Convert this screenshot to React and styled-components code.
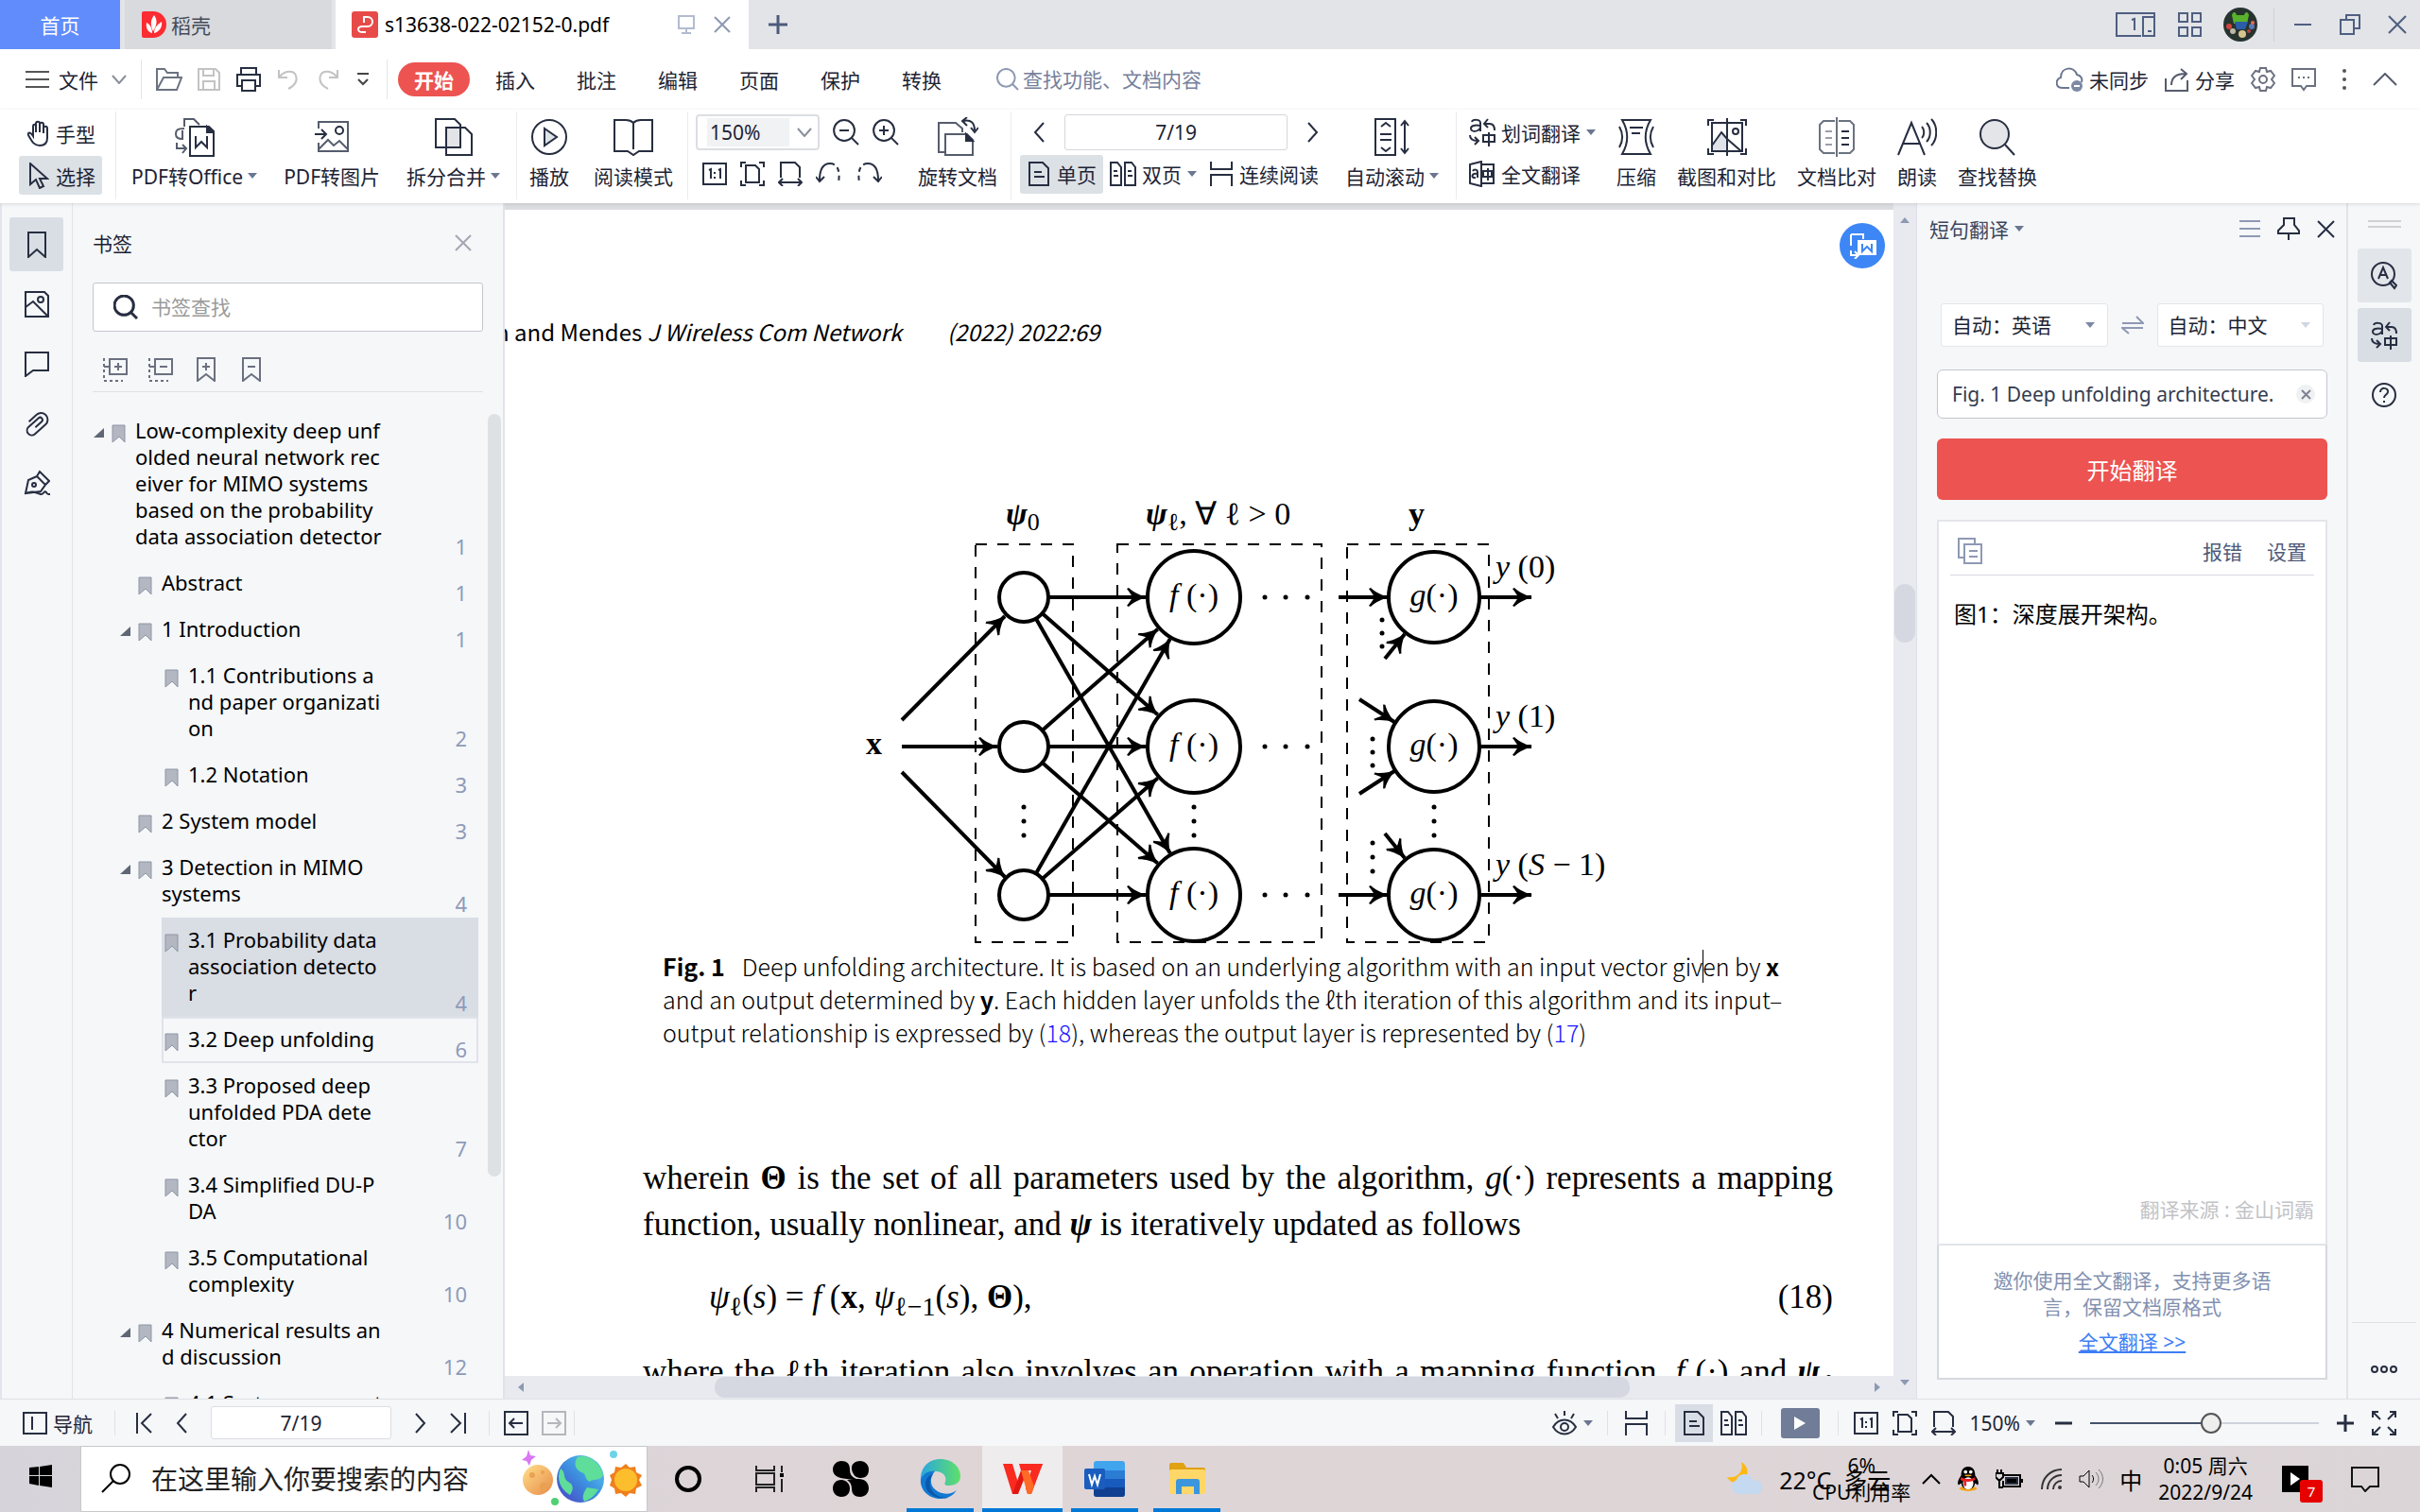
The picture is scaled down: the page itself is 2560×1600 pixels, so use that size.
import styled, { createGlobalStyle } from "styled-components";
import { useState } from "react";

const ui = `"Noto Sans", "Open Sans", "Noto Sans CJK SC", sans-serif`;
const ink = "#272e41";

// ---------- icons ----------
function Ico({ w = 26, h = 26, s = 2, c, children }) {
  return (
    <Svg width={w} height={h} viewBox={`0 0 ${w} ${h}`} strokeWidth={s} $c={c} aria-hidden="true">
      {children}
    </Svg>
  );
}

const Caret = ({ c = "#6b7690" }) => (
  <Ico w={10} h={6} s={0} c={c}><path d="M0 0h10L5 6z" fill="currentColor" /></Ico>
);
const Close = ({ w = 20, c = ink, s = 2 }) => (
  <Ico w={w} h={w} c={c} s={s}><path d={`M1 1L${w - 1} ${w - 1}M${w - 1} 1L1 ${w - 1}`} /></Ico>
);
const ChevronLeft = () => <Ico w={12} h={22}><path d="M11 1L2 11l9 10" /></Ico>;
const ChevronRight = () => <Ico w={12} h={22}><path d="M1 1l9 10-9 10" /></Ico>;
const ChevronDown = ({ c = "#8a8f9c" }) => <Ico w={16} h={10} c={c}><path d="M1 1l7 8 7-8" /></Ico>;
const OneToOne = () => (
  <Ico><path d="M1 2h24v22H1zM7 9l2-1v10M17 9l2-1v10M13 11v2M13 16v2" /></Ico>
);
const FitPage = () => (
  <Ico><path d="M1 6V1h5M20 1h5v5M25 20v5h-5M6 25H1v-5M6 4h10l4 4v14H6z" /></Ico>
);
const FitWidth = () => (
  <Ico><path d="M3 17V1h15l5 5v11M1 22h24M5 18l-4 4 4 4M21 18l4 4-4 4" /></Ico>
);
const SinglePage = () => (
  <Ico w={24} h={28}><path d="M2 2h14l6 6v18H2zM7 12h8M7 17h11" /></Ico>
);
const DoublePage = () => (
  <Ico w={28} h={28}><path d="M1 2h7l4 5v19H1zM16 2h7l4 5v19H16zM4 11h4M4 16h5M19 11h4M19 16h5" /></Ico>
);
const Continuous = () => <Ico w={26} h={28}><path d="M2 1v8h22V1M2 27V15h22v12" /></Ico>;
const Translate = () => (
  <Ico w={28} h={30}>
    <path d="M3 4c1-3 9-3 9 1v9M12 8C6 7 2 8 2 11c0 4 8 4 10-1M17 6h5c4 0 5 3 5 7M20 1l-4 5 4 4M1 18c0 4 2 6 8 6M6 20l4 4-4 4M15 18h12v7H15zM21 15v15" />
  </Ico>
);
const FullTranslate = () => (
  <Ico w={28} h={28}>
    <path d="M1 4l12-3v26L1 24zM13 4h13v20H13M4 11c1-2 5-2 5 1v6M9 14c-7-1-7 5-2 4M15 11h9v6h-9zM20 8v13" />
  </Ico>
);
const Eye = () => (
  <Ico w={28} h={28}><path d="M2 18c6-10 18-10 24 0-6 10-18 10-24 0zM14 1v5M4 4l3 5M24 4l-3 5" /><circle cx="14" cy="18" r="4" /></Ico>
);
const Glass = ({ w = 26, c = ink, s = 2, d = 0 }) => (
  <Ico w={w} h={w} c={c} s={s}>
    <circle cx={w * 0.43} cy={w * 0.43} r={w * 0.39} />
    <path d={`M${w * 0.7} ${w * 0.7}L${w - 1} ${w - 1}`} />
    {d > 0 && <path d="M7 12h10" />}
    {d > 1 && <path d="M12 7v10" />}
  </Ico>
);
const BookmarkSmall = () => (
  <Ico w={15} h={20} s={1} c="#8f95a3"><path d="M1 1h13v18l-6-6-7 6z" fill="#b2b7c2" /></Ico>
);

// the large ribbon pictures
const big = {
  office: <Ico w={42} h={42}><path d="M10 10V2h10l6 6M10 12c-8 0-9 2-9 6s3 5 7 5v-9M2 27v6h10M8 29l4 4-4 5" stroke="#555c6c" /><path d="M16 10h20l5 5v26H16zM22 20v12l6-6 6 6V20" /><path d="M34 10v6h7z" fill="currentColor" /></Ico>,
  image: <Ico w={36} h={42}><path d="M4 12V5h31v31H4v-9M4 34l10-10 6 6 6-5 9 9" stroke="#555c6c" /><path d="M0 18h11M7 13l5 5-5 5" /><circle cx="26" cy="14" r="4" /></Ico>,
  split: <Ico w={40} h={42}><path d="M1 2h20l6 6v24H1z" /><path d="M12 11h20l7 7v22H12z" /><path d="M12 11h15v21H12z" fill="#e2e4e8" /></Ico>,
  play: <Ico w={40} h={42}><circle cx="20" cy="21" r="18" /><path d="M15 12l13 9-13 9z" fill="#dfe2e7" /></Ico>,
  read: <Ico w={42} h={42}><path d="M21 6c-3-3-6-3-8-3H1v33h14l6 4 6-4h14V3H29c-2 0-5 0-8 3v28" /></Ico>,
  rotate: <Ico w={44} h={42}><path d="M9 37H2V6h18l7 6v4M9 18h23l6 6v16H9z" stroke="#555c6c" /><path d="M28 4c8-2 12 2 12 10M32 0l-5 4 5 5M36 11l4 5 4-5" /><path d="M31 18v7h7z" fill="currentColor" /></Ico>,
  scroll: <Ico w={38} h={42}><path d="M1 2h21v38H1zM7 10l5-4 5 4M7 32l5 4 5-4M6 18h12M6 24h12M32 5v32M28 9l4-5 4 5M28 33l4 5 4-5" /></Ico>,
  zip: <Ico w={40} h={42}><path d="M5 3h30c-7 12-7 24 0 36H5c7-12 7-24 0-36zM2 10c4 7 4 15 0 22M38 10c-4 7-4 15 0 22M13 11h14M15 17h9" /></Ico>,
  shot: <Ico w={42} h={42}><path d="M5 30l11-15 5 7v14H5z" fill="#dfe2e7" stroke="none" /><path d="M1 9V3h6M35 3h6v6M41 33v6h-6M7 39H1v-6M5 6h32v30H5zM21 1v40M5 30l10-14 6 7 15 13" /><circle cx="30" cy="15" r="3" /></Ico>,
  compare: <Ico w={38} h={42}><path d="M17 4H5L1 8v26l4 4h12M21 4h12l4 4v26l-4 4H21M19 0v42" stroke="#6b7280" /><path d="M7 15h7M7 22h7M7 29h7" stroke="#9a9faa" /><path d="M24 15h8M24 22h8M24 29h8" /></Ico>,
  aloud: <Ico w={42} h={42}><path d="M1 40L15 6l14 34M6 28h18M26 10c3 3 3 9 0 12M31 6c5 5 5 15 0 20M36 2c7 7 7 21 0 28" /></Ico>,
  find: <Ico w={40} h={42}><circle cx="17" cy="18" r="15" fill="#e4e5e8" /><path d="M28 29l10 11" /></Ico>,
};

const Hand = () => (
  <Ico w={24} h={28}><path d="M7 17V7c0-3 3-3 3 0v6-9c0-3 4-3 4 0v9-8c0-3 4-3 4 0v9-5c0-3 4-3 4 0v10c0 5-3 8-8 8-6 0-8-4-12-11-1-3 2-4 5 1z" /></Ico>
);
const Arrow = () => (
  <Ico w={24} h={28}><path d="M4 1v22l6-5 4 9 4-2-4-8h8z" /></Ico>
);

// ---------- data ----------
const tabs = ["插入", "批注", "编辑", "页面", "保护", "转换"];

const marks = [
  { lv: 0, open: true, page: 1, lines: ["Low-complexity deep unf", "olded neural network rec", "eiver for MIMO systems", "based on the probability", "data association detector"] },
  { lv: 1, page: 1, lines: ["Abstract"] },
  { lv: 1, open: true, page: 1, lines: ["1 Introduction"] },
  { lv: 2, page: 2, lines: ["1.1 Contributions a", "nd paper organizati", "on"] },
  { lv: 2, page: 3, lines: ["1.2 Notation"] },
  { lv: 1, page: 3, lines: ["2 System model"] },
  { lv: 1, open: true, page: 4, lines: ["3 Detection in MIMO", "systems"] },
  { lv: 2, page: 4, state: "selected", lines: ["3.1 Probability data", "association detecto", "r"] },
  { lv: 2, page: 6, state: "focused", lines: ["3.2 Deep unfolding"] },
  { lv: 2, page: 7, lines: ["3.3 Proposed deep", "unfolded PDA dete", "ctor"] },
  { lv: 2, page: 10, lines: ["3.4 Simplified DU-P", "DA"] },
  { lv: 2, page: 10, lines: ["3.5 Computational", "complexity"] },
  { lv: 1, open: true, page: 12, lines: ["4 Numerical results an", "d discussion"] },
  { lv: 2, page: 12, lines: ["4.1 System parameters"] },
];

function BigTool({ icon, label, menu }) {
  return (
    <BigButton>
      <BigIcon>{big[icon]}</BigIcon>
      <BigLabel>{label}{menu && <Caret />}</BigLabel>
    </BigButton>
  );
}

// ---------- network figure ----------
const rows = [632, 790, 947];
const X0 = 1083;
const X1 = 1263;
const X2 = 1517;

function edge(y1, y2) {
  const dx = X1 - X0;
  const dy = y2 - y1;
  const len = Math.hypot(dx, dy);
  return [X0 + (dx * 27) / len, y1 + (dy * 27) / len, X1 - (dx * 51) / len, y2 - (dy * 51) / len];
}

const arrows = [
  [954, 762, 1063, 652], [954, 790, 1055, 790], [954, 817, 1063, 928],
  ...rows.flatMap((a) => rows.map((b) => edge(a, b))),
  [1416, 632, 1468, 632], [1416, 947, 1468, 947],
  [1465, 697, 1486, 671], [1438, 740, 1475, 764], [1438, 840, 1475, 816], [1465, 882, 1486, 908],
  ...rows.map((y) => [1566, y, 1620, y]),
];

const dots = [
  ...rows.flatMap((y) => [1338, 1360, 1383].map((x) => [x, y])),
  ...[X0, X1, X2].flatMap((x) => [854, 869, 884].map((y) => [x, y])),
  ...[656, 670, 684].map((y) => [1462, y]),
  ...[782, 796, 810].map((y) => [1452, y]),
  ...[892, 907, 922].map((y) => [1452, y]),
];

function Figure() {
  return (
    <FigureSvg viewBox="680 520 1259 487" role="img" aria-label="Deep unfolding architecture">
      <defs>
        <marker id="tip" markerUnits="userSpaceOnUse" markerWidth="24" markerHeight="22" refX="20" refY="11" orient="auto">
          <path d="M21 11C14 9 6 5 2 1L0 2c3 4 5 7 6 9-1 2-3 5-6 9l2 1c4-4 12-8 19-10z" fill="#000" />
        </marker>
      </defs>
      <g fill="none" stroke="#000" strokeWidth="2" strokeDasharray="12 11">
        <path d="M1032 576h103v421h-103zM1182 576h216v421h-216zM1425 576h150v421h-150z" />
      </g>
      <g stroke="#000" strokeWidth="4">
        {arrows.map(([a, b, c, d], i) => (
          <line key={i} x1={a} y1={b} x2={c} y2={d} markerEnd="url(#tip)" />
        ))}
      </g>
      <g fill="#fff" stroke="#000" strokeWidth="4">
        {rows.map((y) => (
          <g key={y}>
            <circle cx={X0} cy={y} r="26" />
            <circle cx={X1} cy={y} r="49" />
            <circle cx={X2} cy={y} r="48" />
          </g>
        ))}
      </g>
      {dots.map(([x, y], i) => <circle key={i} cx={x} cy={y} r="2.5" />)}
      {rows.map((y) => (
        <g key={y} textAnchor="middle">
          <text x={X1} y={y + 9}><tspan fontStyle="italic">f </tspan>(·)</text>
          <text x={X2} y={y + 9}><tspan fontStyle="italic">g</tspan>(·)</text>
        </g>
      ))}
      <text x="1064" y="555" fontStyle="italic" fontWeight="bold">ψ<tspan fontSize="26" dy="6" fontStyle="normal" fontWeight="normal">0</tspan></text>
      <text x="1212" y="555" fontStyle="italic" fontWeight="bold">
        ψ<tspan fontSize="26" dy="6" fontWeight="normal" fontStyle="normal">ℓ</tspan>
        <tspan dy="-6" fontWeight="normal" fontStyle="normal">, ∀ ℓ &gt; 0</tspan>
      </text>
      <text x="1490" y="555" fontWeight="bold">y</text>
      <text x="916" y="798" fontWeight="bold">x</text>
      {[["", "0"], ["", "1"], ["S", " − 1"]].map(([v, t], i) => (
        <text key={t} x="1582" y={rows[i] - 21}>
          <tspan fontStyle="italic">y</tspan> (<tspan fontStyle="italic">{v}</tspan>{t})
        </text>
      ))}
    </FigureSvg>
  );
}

// ---------- page parts ----------
function TitleBar() {
  return (
    <TitleRow>
      <HomeTab>首页</HomeTab>
      <DocerTab>
        <svg width="26" height="28" viewBox="0 0 26 28"><path d="M0 2q0-2 2-2h10a14 14 0 0 1 0 28H2q-2 0-2-2z" fill="#fd2b32" /><path d="M13 4c4 5 3 11-1 17-3-6-3-12 1-17zM5 12c4 2 6 6 6 11-5-1-7-6-6-11zM21 11c1 6-3 11-8 12 0-5 3-9 8-12z" fill="#fff" /></svg>
        稻壳
      </DocerTab>
      <ActiveTab>
        <svg width="28" height="28" viewBox="0 0 28 28" fill="none" stroke="#fff" strokeWidth="2"><rect width="28" height="28" rx="3" fill="#e74b48" stroke="none" /><path d="M13 12V6h4a5 5 0 0 1 0 10H11a4 3 0 0 0 0 6h4" /></svg>
        <TabName>s13638-022-02152-0.pdf</TabName>
        <Ico w={20} h={20} c="#b3bbcf"><path d="M2 1h16v13H2zM10 14v5M5 19h10" /></Ico>
        <Plain aria-label="关闭标签"><Close w={18} c="#8e99b3" /></Plain>
      </ActiveTab>
      <NewTab aria-label="新建"><Ico w={22} h={22} s={3} c="#4c5b7a"><path d="M11 1v20M1 11h20" /></Ico></NewTab>
      <Spring />
      <WindowTools>
        <Ico w={42} h={26} c="#4f5f80"><path d="M27 25H1V1h40v24M29 5h12v20H29zM34 20h4M17 8l3-1v12" /></Ico>
        <Ico w={26} h={26} c="#4f5f80"><path d="M2 1h9v9H2zM16 1h9v9h-9zM2 16h9v9H2zM16 16h9v9h-9z" /></Ico>
        <svg width="36" height="36" viewBox="0 0 36 36"><circle cx="18" cy="18" r="18" fill="#26332f" /><path d="M9 8c1-4 4-4 5 0h8c1-4 4-4 5 0l-2 9H11z" fill="#58b22b" /><path d="M12 15h14l-3 8h-9z" fill="#2b5da8" /><circle cx="6" cy="20" r="3" fill="#d2443c" /><circle cx="30" cy="20" r="3" fill="#5a78b4" /><circle cx="10" cy="25" r="3" fill="#bdb7a6" /><circle cx="20" cy="28" r="4" fill="#d6c58d" /><circle cx="31" cy="16" r="2" fill="#e36a5c" /><circle cx="27" cy="25" r="2" fill="#b5423a" /></svg>
      </WindowTools>
      <WindowTools $line>
        <Plain aria-label="最小化"><Ico w={20} h={20} c="#4f5f80"><path d="M1 10h18" /></Ico></Plain>
        <Plain aria-label="还原"><Ico w={22} h={22} c="#4f5f80"><path d="M1 6h14v15H1zM7 6V1h14v14h-6" /></Ico></Plain>
        <Plain aria-label="关闭"><Close w={20} c="#4f5f80" /></Plain>
      </WindowTools>
    </TitleRow>
  );
}

function MenuBar() {
  return (
    <MenuRow>
      <MenuGroup $gap={9} $l={27} $r={15}>
        <Ico w={26} h={20} c="#555"><path d="M0 2h25M0 10h25M0 18h25" /></Ico>
        <Plain>文件</Plain>
        <Chev><ChevronDown /></Chev>
      </MenuGroup>
      <MenuGroup $gap={16} $l={15} $r={18}>
        <Ico w={28} h={24} c="#6b7280"><path d="M1 23V1h8l3 4h11v5M1 23L8 10h19l-5 13z" /></Ico>
        <Ico w={24} h={24} c="#c3c3c3"><path d="M1 1h18l4 4v18H1zM6 1v7h11V1M6 23v-9h12v9" /></Ico>
        <Ico w={28} h={26}><path d="M6 7V1h16v6M6 20H2V8h24v12h-4M7 14h14v11H7z" /><path d="M1 8h26" /></Ico>
        <Ico w={26} h={24} c="#c3c3c3"><path d="M2 2v8h9M2 10C8 2 18 2 20 8c2 6-2 11-8 14" /></Ico>
        <Ico w={26} h={24} c="#c3c3c3"><path d="M22 2v8h-9M22 10C16 2 6 2 4 8c-2 6 2 11 8 14" /></Ico>
        <Ico w={14} h={14} c="#444"><path d="M1 1h12M2 7l5 5 5-5" /></Ico>
      </MenuGroup>
      <Tabs>
        <StartTab>开始</StartTab>
        {tabs.map((t) => <TabButton key={t}>{t}</TabButton>)}
      </Tabs>
      <FindBox>
        <Glass w={24} c="#8e99b3" />
        <input aria-label="查找功能" placeholder="查找功能、文档内容" />
      </FindBox>
      <Spring />
      <MenuTools>
        <Plain>
          <Ico w={29} h={26} c="#6b7690"><path d="M14 22H7c-8 0-8-9-2-11C5-1 20-1 22 8c5 1 6 5 5 8" /><circle cx="22" cy="20" r="6" fill="#7c88a4" stroke="none" /><path d="M19 20h6" stroke="#fff" /></Ico>
          未同步
        </Plain>
        <Plain>
          <Ico w={26} h={26} c="#555c6c"><path d="M1 12v13h23V14M7 19C7 11 12 7 22 7M17 2l6 5-6 6" /></Ico>
          分享
        </Plain>
        <Ico w={26} h={26} c="#6b7080"><circle cx="13" cy="13" r="4" /><path d="M10 1h6l1 4 4-1 4 5-3 4 3 4-4 5-4-1-1 4h-6l-1-4-4 1-4-5 3-4-3-4 4-5 4 1z" /></Ico>
        <Ico w={26} h={26} c="#6b7080"><path d="M1 2h24v18h-9l-3 4-3-4H1zM7 11h2M12 11h2M17 11h2" /></Ico>
        <Ico w={4} h={24} s={0} c="#555"><circle cx="2" cy="3" r="2" fill="currentColor" /><circle cx="2" cy="12" r="2" fill="currentColor" /><circle cx="2" cy="21" r="2" fill="currentColor" /></Ico>
        <Ico w={26} h={14} c="#555c6c"><path d="M1 13L13 1l12 12" /></Ico>
      </MenuTools>
    </MenuRow>
  );
}

function Ribbon({ page, setPage }) {
  return (
    <RibbonRow>
      <Group $l={20} $r={14}>
        <Rows>
          <SmallTool><Hand />手型</SmallTool>
          <SmallTool $on><Arrow />选择</SmallTool>
        </Rows>
      </Group>
      <Group $l={16} $r={17} $gap={28}>
        <BigTool icon="office" label="PDF转Office" menu />
        <BigTool icon="image" label="PDF转图片" />
        <BigTool icon="split" label="拆分合并" menu />
      </Group>
      <Group $l={13} $r={15} $gap={26}>
        <BigTool icon="play" label="播放" />
        <BigTool icon="read" label="阅读模式" />
      </Group>
      <Group $l={8} $r={14} $gap={20}>
        <Rows>
          <Row $gap={14}>
            <Combo>
              <select aria-label="缩放" defaultValue="150"><option value="150">150%</option></select>
              <ChevronDown c="#8a8f9c" />
            </Combo>
            <Glass w={28} d={1} />
            <Glass w={28} d={2} />
          </Row>
          <Row $gap={14} $l={7}>
            <OneToOne />
            <FitPage />
            <FitWidth />
            <Ico w={28} h={26}><path d="M4 20C4 8 8 2 15 2" /><path d="M15 2c8 0 11 8 9 20" strokeDasharray="5 4" /><path d="M0 16l4 5 5-5" /></Ico>
            <Ico w={28} h={26}><path d="M24 20C24 8 20 2 13 2" /><path d="M13 2C5 2 2 10 4 22" strokeDasharray="5 4" /><path d="M28 16l-4 5-5-5" /></Ico>
          </Row>
        </Rows>
        <BigTool icon="rotate" label="旋转文档" />
      </Group>
      <Group $l={9} $r={18} $gap={28}>
        <Rows>
          <Row $gap={21} $l={14}>
            <Plain aria-label="上一页"><ChevronLeft /></Plain>
            <PageField aria-label="页码" value={page} onChange={(e) => setPage(e.target.value)} />
            <Plain aria-label="下一页"><ChevronRight /></Plain>
          </Row>
          <Row $gap={7}>
            <SmallTool $on><SinglePage />单页</SmallTool>
            <Plain><DoublePage />双页<Caret /></Plain>
            <Plain $l={6}><Continuous />连续阅读</Plain>
          </Row>
        </Rows>
        <BigTool icon="scroll" label="自动滚动" menu />
      </Group>
      <Group $l={13} $gap={22} $last>
        <Rows>
          <Row><Plain><Translate />划词翻译<Caret /></Plain></Row>
          <Row><Plain><FullTranslate />全文翻译</Plain></Row>
        </Rows>
        <BigTool icon="zip" label="压缩" />
        <BigTool icon="shot" label="截图和对比" />
        <BigTool icon="compare" label="文档比对" />
        <BigTool icon="aloud" label="朗读" />
        <BigTool icon="find" label="查找替换" />
      </Group>
    </RibbonRow>
  );
}

function Bookmarks() {
  return (
    <BookmarkPanel>
      <PanelHead>
        <h2>书签</h2>
        <Plain aria-label="关闭书签"><Close w={18} c="#a3a7b3" /></Plain>
      </PanelHead>
      <SearchBox>
        <Glass w={26} s={3} />
        <input aria-label="书签查找" placeholder="书签查找" />
      </SearchBox>
      <MarkTools>
        <Ico c="#6b7080"><path d="M7 2h18v16H7zM12 10h8M16 6v8" /><path d="M1 1v24h20" strokeDasharray="3 3" /><path d="M1 10h6" /></Ico>
        <Ico c="#6b7080"><path d="M7 2h18v16H7zM12 10h8" /><path d="M1 1v24h20" strokeDasharray="3 3" /><path d="M1 10h6" /></Ico>
        <Ico c="#6b7080"><path d="M4 1h18v24l-9-7-9 7zM9 10h8M13 6v8" /></Ico>
        <Ico c="#6b7080"><path d="M4 1h18v24l-9-7-9 7zM9 10h8" /></Ico>
      </MarkTools>
      <MarkScroll>
        <MarkList>
          {marks.map((m) => (
            <Mark key={m.lines[0]} $lv={m.lv}>
              <Fold>{m.open && <Ico w={11} h={10} s={0} c="#5f6674"><path d="M11 0v10H0z" fill="currentColor" /></Ico>}</Fold>
              <MarkBody $state={m.state}>
                <BookmarkSmall />
                <MarkText>{m.lines.map((l) => <span key={l}>{l}</span>)}</MarkText>
                <MarkPage>{m.page}</MarkPage>
              </MarkBody>
            </Mark>
          ))}
        </MarkList>
        <MarkThumb />
      </MarkScroll>
    </BookmarkPanel>
  );
}

function Document() {
  return (
    <DocArea>
      <DocMain>
        <Page>
          <RunningHead>n and Mendes <i>J Wireless Com Network</i><i>(2022) 2022:69</i></RunningHead>
          <Column>
            <Figure />
            <Caption>
              <div><b>Fig. 1</b><Lead>Deep unfolding architecture. It is based on an underlying algorithm with an input vector giv<TextCaret />en by <b>x</b></Lead></div>
              <div>and an output determined by <b>y</b>. Each hidden layer unfolds the ℓth iteration of this algorithm and its input–</div>
              <div>output relationship is expressed by (<a href="#18">18</a>), whereas the output layer is represented by (<a href="#17">17</a>)</div>
            </Caption>
            <Body>
              <Line $full>wherein <b>Θ</b> is the set of all parameters used by the algorithm, <i>g</i>(·) represents a mapping</Line>
              <Line>function, usually nonlinear, and <b><i>ψ</i></b> is iteratively updated as follows</Line>
            </Body>
            <Equation>
              <span><i>ψ</i><sub>ℓ</sub>(<i>s</i>) = <i>f</i> (<b>x</b>, <i>ψ</i><sub>ℓ−1</sub>(<i>s</i>), <b>Θ</b>),</span>
              <span>(18)</span>
            </Equation>
            <Body>
              <Line $full>where the ℓth iteration also involves an operation with a mapping function, <i>f</i> (·) and <b><i>ψ</i></b><sub>ℓ</sub></Line>
            </Body>
          </Column>
        </Page>
        <ConvertBadge aria-label="转换">
          <Ico w={30} h={28} c="#fff"><path d="M3 2h13v5M3 2v12M3 19v5h7M7 20l4 4-4 4" /><path d="M11 9h18v14H11z" fill="#fff" /><path d="M15 12v8l5-5 5 5v-8" stroke="#3d86f5" /></Ico>
        </ConvertBadge>
        <HScroll>
          <Ico w={6} h={10} s={0} c="#8e99b3"><path d="M6 0v10L0 5z" fill="currentColor" /></Ico>
          <HTrack><HThumb /></HTrack>
          <Ico w={6} h={10} s={0} c="#8e99b3"><path d="M0 0v10l6-5z" fill="currentColor" /></Ico>
        </HScroll>
      </DocMain>
      <VScroll>
        <Ico w={10} h={6} s={0} c="#8e99b3"><path d="M0 6h10L5 0z" fill="currentColor" /></Ico>
        <VTrack><VThumb /></VTrack>
        <Caret c="#8e99b3" />
      </VScroll>
    </DocArea>
  );
}

function TranslatePanel() {
  const [text, setText] = useState("Fig. 1 Deep unfolding architecture.");
  return (
    <SidePanel>
      <SideHead>
        <Plain>短句翻译<Caret /></Plain>
        <Spring />
        <Ico w={22} h={20} c="#8e99b3"><path d="M0 2h22M0 10h22M0 18h22" /></Ico>
        <Ico w={24} h={24}><path d="M7 1h11v7l5 6v3H1v-3l6-6zM12 17v7" /></Ico>
        <Plain aria-label="关闭翻译"><Close w={19} /></Plain>
      </SideHead>
      <LangRow>
        <Lang>
          <select aria-label="源语言"><option>自动：英语</option></select>
          <Caret c="#7c88a4" />
        </Lang>
        <Ico w={24} h={20} c="#8e99b3"><path d="M1 8h22l-7-7M23 13H1l7 6" /></Ico>
        <Lang>
          <select aria-label="目标语言"><option>自动：中文</option></select>
          <Caret c="#cfd6e4" />
        </Lang>
      </LangRow>
      <Source>
        <input aria-label="原文" value={text} onChange={(e) => setText(e.target.value)} />
        <Clear aria-label="清空" onClick={() => setText("")}><Close w={11} c="#7c8290" /></Clear>
      </Source>
      <Go>开始翻译</Go>
      <Result>
        <ResultHead>
          <Ico w={26} h={28} c="#8e99b3"><path d="M6 21H1V1h17v5M7 7h18v20H7zM12 14h9M12 20h9" /></Ico>
          <Spring />
          <Plain>报错</Plain>
          <Plain>设置</Plain>
        </ResultHead>
        <ResultText>图1：深度展开架构。</ResultText>
        <Origin>翻译来源 : 金山词霸</Origin>
      </Result>
      <Invite>
        <p>邀你使用全文翻译，支持更多语<br />言，保留文档原格式</p>
        <a href="#full">全文翻译 &gt;&gt;</a>
      </Invite>
    </SidePanel>
  );
}

function StatusBar({ page, setPage }) {
  return (
    <StatusRow>
      <StatusGroup $l={24} $r={23}>
        <Plain><Ico w={26} h={26}><path d="M1 2h24v22H1zM10 6v14" /></Ico>导航</Plain>
      </StatusGroup>
      <StatusGroup $l={21} $r={23} $gap={25}>
        <Plain aria-label="首页页码"><Ico w={18} h={22}><path d="M2 0v22M17 1L7 11l10 10" /></Ico></Plain>
        <Plain aria-label="上一页"><ChevronLeft /></Plain>
        <StatusField aria-label="当前页" value={page} onChange={(e) => setPage(e.target.value)} />
        <Plain aria-label="下一页"><ChevronRight /></Plain>
        <Plain aria-label="末页"><Ico w={18} h={22}><path d="M16 0v22M1 1l10 10L1 21" /></Ico></Plain>
      </StatusGroup>
      <StatusGroup $l={15} $r={8} $gap={14}>
        <Ico><path d="M1 1h24v24H1zM20 13H6M11 8l-5 5 5 5" /></Ico>
        <Ico c="#b4b6bb"><path d="M1 1h24v24H1zM6 13h14M15 8l5 5-5 5" /></Ico>
      </StatusGroup>
      <Spring />
      <StatusGroup $r={15}><Plain><Eye /><Caret /></Plain></StatusGroup>
      <StatusGroup $l={17} $r={17}><Continuous /></StatusGroup>
      <StatusGroup $l={10} $r={15} $gap={8}>
        <ViewOn aria-label="单页"><SinglePage /></ViewOn>
        <DoublePage />
      </StatusGroup>
      <StatusGroup $l={20} $r={19}>
        <PlayButton aria-label="播放"><Ico w={12} h={14} s={0} c="#fff"><path d="M0 0l12 7-12 7z" fill="currentColor" /></Ico></PlayButton>
      </StatusGroup>
      <StatusGroup $l={16} $gap={15} $last>
        <OneToOne />
        <FitPage />
        <FitWidth />
        <Plain>150%<Caret /></Plain>
      </StatusGroup>
      <StatusGroup $l={20} $r={25} $gap={18} $last>
        <Ico w={20} h={20} s={3}><path d="M1 10h18" /></Ico>
        <Zoom type="range" aria-label="缩放比例" min="0" max="100" defaultValue="53" />
        <Ico w={20} h={20} s={3}><path d="M1 10h18M10 1v18" /></Ico>
        <Ico><path d="M1 7V1h6M19 1h6v6M25 19v6h-6M7 25H1v-6M1 1l8 8M25 1l-8 8M25 25l-8-8M1 25l8-8" /></Ico>
      </StatusGroup>
    </StatusRow>
  );
}

function TaskBar() {
  return (
    <Task>
      <Start aria-label="开始菜单">
        <svg width="24" height="24" viewBox="0 0 24 24"><path d="M0 3l10-1v9H0zM11 2l13-2v11H11zM0 12h10v10L0 20zM11 12h13v12l-13-2z" /></svg>
      </Start>
      <TaskSearch>
        <Ico w={34} h={34}><circle cx="21" cy="12" r="10" stroke="#000" /><path d="M14 19L2 31" stroke="#000" /></Ico>
        <input aria-label="在这里输入你要搜索的内容" placeholder="在这里输入你要搜索的内容" />
        <svg width="128" height="62" viewBox="0 0 128 62">
          <defs>
            <linearGradient id="earth" x1="0" y1="1" x2="1" y2="0"><stop offset="0" stopColor="#4b3fc4" /><stop offset=".5" stopColor="#3c8fdf" /><stop offset="1" stopColor="#5bd0f0" /></linearGradient>
            <linearGradient id="moon" x1="0" y1="0" x2="1" y2="1"><stop offset="0" stopColor="#ffe08a" /><stop offset="1" stopColor="#e88a4a" /></linearGradient>
          </defs>
          <path d="M8 0l2 6 6 1-5 4-2 6-3-5-5-1 5-4z" fill="#d977f5" />
          <circle cx="18" cy="32" r="16" fill="url(#moon)" /><circle cx="12" cy="27" r="3" fill="#e9a152" /><circle cx="24" cy="39" r="4" fill="#e9a152" /><circle cx="23" cy="24" r="2" fill="#e9a152" />
          <circle cx="63" cy="31" r="25" fill="url(#earth)" />
          <path d="M60 8c8-4 24 4 27 18-2 8-10 4-14 8-6-2-3-9-9-10-6-3-9-9-4-16zM42 20c6 4 2 10 8 14 6 3 6 8 2 14-10-6-15-17-10-28zM70 40l12 2c-4 7-9 11-15 13-3-6 0-10 3-15z" fill="#5fdd9a" />
          <path d="M111 15l4 4 6-1 1 6 6 3-3 5 3 6-6 3-1 6-6-1-4 4-5-4-6 1-1-6-5-3 2-6-2-5 5-3 1-6 6 1z" fill="#f07f1d" />
          <circle cx="111" cy="32" r="12" fill="#fdbe2d" />
          <circle cx="98" cy="5" r="4" fill="#6fd3e8" /><circle cx="36" cy="55" r="4" fill="#4fd072" />
        </svg>
      </TaskSearch>
      <Pinned>
        <TaskApp aria-label="Cortana">
          <svg width="32" height="32" viewBox="0 0 32 32" fill="none" stroke="#000" strokeWidth="4"><circle cx="16" cy="16" r="12" /></svg>
        </TaskApp>
        <TaskApp aria-label="任务视图">
          <svg width="32" height="28" viewBox="0 0 32 28" fill="none" stroke="#222" strokeWidth="2"><path d="M2 0v5h19V0M2 8h19v12H2zM2 28v-5h19v5M29 0v7M29 14v14" /><path d="M27 8h4v4h-4z" fill="#000" stroke="none" /></svg>
        </TaskApp>
        <TaskApp aria-label="应用">
          <svg width="40" height="40" viewBox="0 0 40 40">
            <path d="M10 1c6 0 9 3 9 9 0 5 2 8 7 10-2 1-4 1-7 0C10 20 1 18 1 10c0-5 4-9 9-9z" />
            <path d="M39 10c0 6-3 9-9 9-5 0-8-4-9-9-1-6 4-9 9-9s9 4 9 9z" />
            <path d="M1 30c0-5 3-9 9-9 5 0 9 4 9 9 0 6-4 9-9 9s-9-4-9-9z" />
            <path d="M30 39c-6 0-9-3-9-9 0-4-2-7-5-9 3-1 7-1 12-1 7 0 11 4 11 10 0 5-4 9-9 9z" />
          </svg>
        </TaskApp>
      </Pinned>
      <TaskApp $open aria-label="Edge">
        <svg width="44" height="42" viewBox="0 0 44 42">
          <defs><linearGradient id="edge" x1="0" y1="0" x2="1" y2="0"><stop offset="0" stopColor="#2aa6e0" /><stop offset="1" stopColor="#5fe06a" /></linearGradient></defs>
          <path d="M22 0c13 0 21 9 21 18 0 8-7 10-13 10-4 0-4-2-3-4 2-6-3-11-10-11C8 13 3 18 1 24 0 10 8 0 22 0z" fill="url(#edge)" />
          <path d="M1 22c2-6 8-10 15-9-5 5-6 14 0 19 6 6 17 6 23 1-4 6-10 9-17 9C9 42 0 32 1 22z" fill="#1179d2" />
          <path d="M14 16c-5 6-5 15 2 21 4 3 9 4 14 4-14 2-24-5-24-15 0-4 3-9 8-10z" fill="#0b58ab" />
        </svg>
      </TaskApp>
      <TaskApp $open $active aria-label="WPS">
        <svg width="44" height="34" viewBox="0 0 44 34">
          <path d="M18 1h25l-3 7H20z" fill="#fa2a20" />
          <path d="M1 1h10l6 20-3 12h-3z" fill="#fa2a20" />
          <path d="M33 1h10L31 33h-4l-2-6z" fill="#fa2a20" />
          <path d="M20 8h7L17 33h-6z" fill="#e31712" />
          <path d="M20 8h8l6 17-3 8h-4z" fill="#ff6a26" />
        </svg>
      </TaskApp>
      <TaskApp $open aria-label="Word">
        <svg width="44" height="38" viewBox="0 0 44 38"><rect x="10" width="33" height="38" rx="3" fill="#41a5ee" /><path d="M10 10h33v9H10z" fill="#2b7cd3" /><path d="M10 19h33v9H10z" fill="#185abd" /><path d="M10 28h33v7q0 3-3 3H13q-3 0-3-3z" fill="#103f91" /><rect y="8" width="22" height="22" rx="2" fill="#1a5dbe" /><path d="M5 14l3 11 3-9 3 9 3-11" fill="none" stroke="#fff" strokeWidth="2" /></svg>
      </TaskApp>
      <TaskApp $open aria-label="文件资源管理器">
        <svg width="40" height="34" viewBox="0 0 40 34"><path d="M1 2q0-2 2-2h13l3 5h18q2 0 2 2v8H1z" fill="#e0a112" /><rect x="1" y="7" width="38" height="26" rx="2" fill="#ffd768" /><path d="M8 33V20q0-3 3-3h19q3 0 3 3v13h-6v-8H14v8z" fill="#3b96dd" /></svg>
      </TaskApp>
      <Spring />
      <Weather>
        <svg width="40" height="36" viewBox="0 0 40 36"><path d="M16 0c10 6 8 20-2 22-6 1-11-2-13-6 10 2 18-5 15-16z" fill="#fdb913" /><path d="M12 34a8 8 0 0 1-1-15c2-8 15-8 17 0 14 0 13 15 2 15z" fill="#c5d9f0" /></svg>
        22°C&nbsp; 多云
        <Cpu>6%<br />CPU利用率</Cpu>
      </Weather>
      <Tray>
        <Ico w={20} h={12}><path d="M1 11l9-9 9 9" stroke="#000" /></Ico>
        <svg width="24" height="28" viewBox="0 0 26 28"><ellipse cx="13" cy="25" rx="10" ry="3" fill="#f5a312" /><path d="M13 0c7 0 8 6 8 10 3 4 5 9 3 11l-3-2c-1 5-4 7-8 7s-7-2-8-7l-3 2c-2-2 0-7 3-11 0-4 1-10 8-10z" /><ellipse cx="13" cy="19" rx="6" ry="7" fill="#fff" /><path d="M5 12q8 4 16 0v3q-5 3-10 2v5H8v-5l-4-2z" fill="#e5232a" /><circle cx="10" cy="6" r="2" fill="#fff" /><circle cx="16" cy="6" r="2" fill="#fff" /><ellipse cx="13" cy="10" rx="4" ry="1" fill="#f5a312" /></svg>
        <Ico w={30} h={20}><path d="M8 6h18v12H8V12M28 10v4M2 0v4M6 0v4M0 4h8v4L5 11H3L0 8zM4 11v8h4" stroke="#000" /><path d="M11 9h12v6H11z" fill="#000" /></Ico>
        <Ico w={24} h={24} c="#333"><path d="M2 23C2 11 11 2 23 2M8 23c0-9 7-15 15-15M14 23c0-5 4-9 9-9" /><circle cx="21" cy="21" r="1" /></Ico>
        <Ico w={26} h={22} s={1}><path d="M1 8h4l6-6v18l-6-6H1zM14 7c2 2 2 6 0 8" stroke="#000" /><path d="M18 4c4 4 4 10 0 14M21 1c6 6 6 14 0 20" stroke="#777" /></Ico>
        <Ime>中</Ime>
        <Clock>0:05 周六<br />2022/9/24</Clock>
        <Notice>
          <Ico w={28} h={28} s={0}><path d="M0 0h28v28H0z" fill="#000" /><path d="M9 7l10 7-10 7z" fill="#fff" /></Ico>
          <Badge>7</Badge>
        </Notice>
        <Ico w={30} h={28}><path d="M1 2h28v20h-9l-5 5-4-5H1z" stroke="#111" /></Ico>
      </Tray>
    </Task>
  );
}

export default function App() {
  const [page, setPage] = useState("7/19");
  return (
    <Shell>
      <GlobalStyle />
      <TitleBar />
      <MenuBar />
      <Ribbon page={page} setPage={setPage} />
      <Work>
        <Rail>
          <RailButton $on aria-label="书签"><Ico w={22} h={28}><path d="M2 1h18v26l-9-8-9 8z" /></Ico></RailButton>
          <RailButton aria-label="缩略图"><Ico w={26} h={28}><path d="M1 1h20l4 4v22H1zM1 17l8-6 15 15" /><circle cx="17" cy="9" r="3" /></Ico></RailButton>
          <RailButton aria-label="批注"><Ico w={28} h={28}><path d="M2 2h24v19H10l-8 6z" /></Ico></RailButton>
          <RailButton aria-label="附件"><Ico w={28} h={28}><path transform="rotate(-42 14 14)" d="M10 16h9a2 2 0 0 0 0-5H5a5 5 0 0 0 0 10h15a7 7 0 0 0 0-14H9" /></Ico></RailButton>
          <RailButton aria-label="签名"><Ico w={28} h={28}><path d="M2 25l3-14 9-4 9 9-5 7zM14 7l3-5 10 10-4 4M2 25c8-3 10-1 16 1 3 1 4-5 6-2 1 3 2 2 4 2" /><circle cx="11" cy="16" r="2" /></Ico></RailButton>
        </Rail>
        <Bookmarks />
        <Document />
        <TranslatePanel />
        <RightRail>
          <Grip />
          <RailButton $soft aria-label="查找"><Ico w={28} h={30}><circle cx="13" cy="13" r="12" /><path d="M8 18l5-12 5 12M10 14h6M20 22l5 6 2-3-5-5z" /></Ico></RailButton>
          <RailButton $on aria-label="翻译"><Translate /></RailButton>
          <RailButton aria-label="帮助"><Ico w={28} h={28}><circle cx="14" cy="14" r="12" /><path d="M10 11c0-6 9-5 8 0-1 3-4 3-4 6M14 20v2" /></Ico></RailButton>
          <Spring />
          <More aria-label="更多"><Ico w={30} h={10}><circle cx="5" cy="5" r="3" /><circle cx="15" cy="5" r="3" /><circle cx="25" cy="5" r="3" /></Ico></More>
        </RightRail>
      </Work>
      <StatusBar page={page} setPage={setPage} />
      <TaskBar />
    </Shell>
  );
}

// ---------- styles ----------
const GlobalStyle = createGlobalStyle`
  * { box-sizing: border-box; }
  body {
    margin: 0;
    font-family: ${ui};
    font-size: 21px;
    color: #1d2333;
  }
  button, input, select {
    font: inherit;
    color: inherit;
    border: 0;
    background: none;
    padding: 0;
    margin: 0;
    outline: 0;
  }
  h2, p, ul { margin: 0; padding: 0; font-weight: 400; font-size: inherit; }
`
const Svg = styled.svg`
flex: none;
fill: none;
stroke: currentColor;
color: ${(p) => p.$c || ink};
`
const Shell = styled.div`
display: flex;
flex-direction: column;
height: 100vh;
overflow: hidden;
white-space: nowrap;
`
const Spring = styled.div`
flex: 1;
`
const Plain = styled.button`
display: flex;
align-items: center;
gap: 6px;
margin-left: ${(p) => p.$l || 0}px;
`
const TitleRow = styled.header`
display: flex;
height: 52px;
flex: none;
background: #e2e4e8;
`
const HomeTab = styled.button`
width: 127px;
background: #608dfb;
color: #fff;
margin-right: 5px;
`
const DocerTab = styled.button`
display: flex;
align-items: center;
gap: 5px;
width: 219px;
padding-left: 18px;
background: #d8dadd;
color: #444b5a;
margin-right: 4px;
`
const ActiveTab = styled.div`
display: flex;
align-items: center;
gap: 7px;
width: 437px;
padding: 0 19px 0 17px;
background: #fff;
color: #000;
button{
  margin-left: 12px;
}
`
const TabName = styled.span`
flex: 1;
`
const NewTab = styled.button`
width: 62px;
display: flex;
align-items: center;
justify-content: center;
`
const WindowTools = styled.div`
display: flex;
align-items: center;
align-self: center;
height: 36px;
gap: ${(p) => (p.$line ? 29 : 23)}px;
padding: 0 ${(p) => (p.$line ? 14 : 17)}px 0 20px;
border-left: ${(p) => (p.$line ? "1px solid #cdd0d6" : "0")};
`
const MenuRow = styled.nav`
display: flex;
align-items: center;
height: 64px;
flex: none;
background: #fff;
`
const MenuGroup = styled.div`
display: flex;
align-items: center;
height: 42px;
gap: ${(p) => p.$gap}px;
padding: 0 ${(p) => p.$r}px 0 ${(p) => p.$l}px;
border-right: 1px solid #e4e5e8;
`
const Chev = styled.span`
display: flex;
padding-left: 5px;
`
const Tabs = styled.div`
display: flex;
align-items: center;
padding-left: 11px;
`
const StartTab = styled.button`
width: 76px;
height: 36px;
border-radius: 18px;
background: #ec5351;
color: #fff;
font-weight: 700;
margin-right: 5px;
`
const TabButton = styled.button`
width: 86px;
`
const FindBox = styled.label`
display: flex;
align-items: center;
gap: 4px;
padding-left: 36px;
color: #75809a;
input{
  width: 240px;
}
input::placeholder{
  color: #75809a;
  opacity: 1;
}
`
const MenuTools = styled.div`
display: flex;
align-items: center;
gap: 17px;
padding-right: 24px;
svg:nth-last-child(2){
  margin: 0 11px;
}
`
const RibbonRow = styled.div`
display: flex;
height: 99px;
flex: none;
background: #fff;
padding: 2px 0 4px;
box-shadow: 0 1px 4px rgba(0, 0, 0, 0.12);
position: relative;
z-index: 1;
`
const Group = styled.div`
display: flex;
gap: ${(p) => p.$gap || 0}px;
padding: 0 ${(p) => p.$r || 0}px 0 ${(p) => p.$l}px;
border-right: ${(p) => (p.$last ? "0" : "1px solid #ececee")};
`
const Rows = styled.div`
display: flex;
flex-direction: column;
gap: 4px;
padding-top: 2px;
`
const Row = styled.div`
display: flex;
align-items: center;
height: 40px;
gap: ${(p) => p.$gap || 0}px;
padding-left: ${(p) => p.$l || 0}px;
`
const SmallTool = styled.button`
display: flex;
align-items: center;
gap: 7px;
width: 88px;
height: 41px;
padding-left: 8px;
border-radius: 3px;
background: ${(p) => (p.$on ? "#dce1e6" : "none")};
`
const BigButton = styled.button`
display: flex;
flex-direction: column;
align-items: center;
padding-top: 6px;
`
const BigIcon = styled.span`
height: 42px;
`
const BigLabel = styled.span`
display: flex;
align-items: center;
gap: 5px;
height: 40px;
`
const Combo = styled.div`
display: flex;
align-items: center;
width: 131px;
height: 38px;
border: 2px solid #dcdee2;
border-radius: 4px;
padding: 2px 6px 2px 10px;
select{
  appearance: none;
  flex: 1;
  height: 100%;
  background: #f1f2f4;
  padding-left: 3px;
  margin-right: 8px;
}
`
const PageField = styled.input`
width: 236px;
height: 38px;
border: 1px solid #d4d6da;
border-radius: 3px;
text-align: center;
background: #fff;
`
const Work = styled.main`
display: flex;
flex: 1;
min-height: 0;
background: #f5f7f9;
`
const Rail = styled.aside`
display: flex;
flex-direction: column;
gap: 6px;
width: 77px;
flex: none;
padding: 15px 8px;
border-left: 2px solid #e3e5ed;
border-right: 1px solid #e1e3e8;
`
const RailButton = styled.button`
display: flex;
align-items: center;
justify-content: center;
width: 57px;
height: 57px;
flex: none;
border-radius: 3px;
background: ${(p) => (p.$on ? "#d9dee5" : p.$soft ? "#e2e5ea" : "none")};
`
const BookmarkPanel = styled.section`
display: flex;
flex-direction: column;
width: 457px;
flex: none;
border-right: 2px solid #e1e3ea;
`
const PanelHead = styled.div`
display: flex;
justify-content: space-between;
align-items: center;
height: 84px;
padding: 0 33px 0 21px;
`
const SearchBox = styled.label`
display: flex;
align-items: center;
gap: 14px;
height: 52px;
margin: 0 21px;
padding-left: 21px;
background: #fff;
border: 1px solid #c4c7cc;
border-radius: 3px;
input::placeholder{
  color: #9a9a9a;
  opacity: 1;
}
`
const MarkTools = styled.div`
display: flex;
gap: 22px;
align-items: center;
height: 64px;
margin: 0 21px 17px;
padding: 16px 11px 0;
border-bottom: 1px solid #dfe1e5;
`
const MarkScroll = styled.div`
display: flex;
flex: 1;
min-height: 0;
overflow: hidden;
`
const MarkList = styled.ul`
flex: 1;
list-style: none;
color: #000;
font-size: 22px;
`
const Mark = styled.li`
display: flex;
padding: 0 10px 0 ${(p) => 22 + p.$lv * 28}px;
`
const Fold = styled.span`
width: 16px;
padding-top: 17px;
line-height: 10px;
`
const MarkBody = styled.div`
display: flex;
flex: 1;
gap: 10px;
padding: 9px 12px 12px 3px;
background: ${(p) => (p.$state === "selected" ? "#d9dde4" : "none")};
box-shadow: ${(p) => (p.$state === "focused" ? "inset 0 0 0 2px #e0e3ea" : "none")};
svg{
  margin-top: 8px;
}
`
const MarkText = styled.span`
flex: 1;
line-height: 28px;
span{
  display: block;
}
`
const MarkPage = styled.span`
align-self: flex-end;
line-height: 28px;
margin-bottom: -11px;
color: #8e9ab8;
`
const MarkThumb = styled.div`
width: 14px;
height: 77%;
margin: 6px 2px 0 0;
border-radius: 7px;
background: #dde1e4;
`
const DocArea = styled.section`
display: flex;
flex: 1;
min-width: 0;
`
const DocMain = styled.div`
position: relative;
display: flex;
flex-direction: column;
flex: 1;
min-width: 0;
border-top: 7px solid #dcdde0;
`
const Page = styled.article`
flex: 1;
min-height: 0;
overflow: hidden;
background: #fff;
color: #000;
padding-top: 111px;
`
const RunningHead = styled.div`
font-family: "Noto Sans CJK SC", sans-serif;
font-size: 24px;
line-height: 35px;
margin-left: -10px;
i + i{
  margin-left: 48px;
}
`
const Column = styled.div`
padding: 152px 64px 0 146px;
`
const FigureSvg = styled.svg`
display: block;
width: 100%;
font-family: "Liberation Serif", serif;
font-size: 34px;
`
const Caption = styled.div`
font-family: "Noto Sans CJK SC", sans-serif;
font-weight: 300;
font-size: 25px;
line-height: 35px;
padding-left: 21px;
margin-top: -2px;
div{
  height: 35px;
}
a{
  color: #1a1aff;
  text-decoration: none;
}
b{
  font-weight: 700;
}
`
const Lead = styled.span`
margin-left: 18px;
`
const TextCaret = styled.span`
position: absolute;
width: 1px;
height: 35px;
background: #000;
`
const Body = styled.div`
font-family: "Liberation Serif", serif;
font-size: 35px;
line-height: 49px;
margin-top: 112px;
& ~ &{
  margin-top: 30px;
}
`
const Line = styled.div`
text-align-last: ${(p) => (p.$full ? "justify" : "left")};
height: 49px;
sub{
  font-size: 24px;
  line-height: 0;
}
`
const Equation = styled.div`
display: flex;
justify-content: space-between;
font-family: "Liberation Serif", serif;
font-size: 35px;
line-height: 49px;
margin-top: 28px;
padding-left: 70px;
sub{
  font-size: 28px;
  line-height: 0;
}
`
const ConvertBadge = styled.button`
position: absolute;
top: 14px;
right: 9px;
display: flex;
align-items: center;
justify-content: center;
width: 48px;
height: 48px;
border-radius: 50%;
background: #3d86f5;
`
const HScroll = styled.div`
display: flex;
align-items: center;
height: 24px;
flex: none;
padding: 0 14px;
background: #e9eaf0;
`
const HTrack = styled.div`
flex: 1;
height: 22px;
padding: 0 18% 0 14%;
`
const HThumb = styled.div`
height: 22px;
border-radius: 10px;
background: #d5d8e0;
`
const VScroll = styled.div`
display: flex;
flex-direction: column;
align-items: center;
width: 25px;
flex: none;
padding: 15px 0 14px;
background: #e9eaf0;
border-right: 1px solid #dfe1e8;
`
const VTrack = styled.div`
flex: 1;
padding-top: 382px;
`
const VThumb = styled.div`
width: 22px;
height: 62px;
border-radius: 11px;
background: #d5d8e0;
`
const SidePanel = styled.aside`
display: flex;
flex-direction: column;
width: 456px;
flex: none;
padding: 0 20px 20px 21px;
border-right: 2px solid #e1e3ea;
`
const SideHead = styled.div`
display: flex;
align-items: center;
gap: 18px;
height: 54px;
margin: 0 -8px;
color: #3d465c;
`
const LangRow = styled.div`
display: flex;
align-items: center;
gap: 14px;
margin: 52px 4px 24px;
`
const Lang = styled.div`
display: flex;
align-items: center;
flex: 1;
height: 46px;
padding: 0 13px 0 11px;
background: #fff;
border: 1px solid #e3e5e9;
border-radius: 3px;
select{
  appearance: none;
  flex: 1;
}
`
const Source = styled.div`
display: flex;
align-items: center;
height: 52px;
padding: 0 12px 0 15px;
background: #fff;
border: 1px solid #c3c7d0;
border-radius: 6px;
color: #343c50;
input{
  flex: 1;
  min-width: 0;
}
`
const Clear = styled.button`
display: flex;
align-items: center;
justify-content: center;
width: 20px;
height: 20px;
border-radius: 50%;
background: #f0f1f3;
`
const Go = styled.button`
height: 65px;
flex: none;
margin: 21px 0;
border-radius: 6px;
background: #ec5351;
color: #fff;
font-size: 24px;
`
const Result = styled.div`
display: flex;
flex-direction: column;
flex: 1;
padding: 0 12px;
background: #fff;
border: 2px solid #e3e5ea;
`
const ResultHead = styled.div`
display: flex;
align-items: center;
gap: 26px;
height: 57px;
padding: 6px 8px 0;
border-bottom: 1px solid #d8dae3;
color: #4f5a78;
`
const ResultText = styled.p`
flex: 1;
padding: 21px 4px;
font-size: 24px;
line-height: 40px;
color: #000;
`
const Origin = styled.p`
text-align: right;
color: #c2c3c7;
padding-bottom: 22px;
`
const Invite = styled.div`
height: 143px;
flex: none;
margin-top: -1px;
padding-top: 23px;
text-align: center;
line-height: 28px;
background: #fff;
border: 2px solid #d6d8e0;
border-top: 1px solid #dfe2e6;
color: #8391b0;
a{
  display: inline-block;
  margin-top: 9px;
  color: #3d7ef5;
}
`
const RightRail = styled.aside`
display: flex;
flex-direction: column;
align-items: center;
gap: 6px;
width: 76px;
flex: none;
padding-top: 18px;
`
const Grip = styled.div`
width: 35px;
height: 8px;
margin-bottom: 16px;
border: solid #cfd1d5;
border-width: 2px 0;
`
const More = styled.button`
width: 68px;
height: 81px;
border-top: 1px solid #dfe1e6;
padding-top: 12px;
`
const StatusRow = styled.footer`
display: flex;
align-items: center;
height: 50px;
flex: none;
background: #f5f7f9;
border-top: 1px solid #dfe1e6;
`
const StatusGroup = styled.div`
display: flex;
align-items: center;
height: 26px;
gap: ${(p) => p.$gap || 0}px;
padding: 0 ${(p) => p.$r || 0}px 0 ${(p) => p.$l || 0}px;
border-right: ${(p) => (p.$last ? "0" : "1px solid #dfe1e6")};
`
const StatusField = styled.input`
width: 191px;
height: 35px;
border: 1px solid #dcdee2;
border-radius: 3px;
text-align: center;
background: #fff;
`
const ViewOn = styled.button`
display: flex;
align-items: center;
justify-content: center;
width: 40px;
height: 40px;
background: #d9dee6;
`
const PlayButton = styled.button`
display: flex;
align-items: center;
justify-content: center;
width: 41px;
height: 32px;
border-radius: 3px;
background: #717d98;
`
const Zoom = styled.input`
appearance: none;
width: 242px;
height: 24px;
background: linear-gradient(to right, #44516b 53%, #cdd2dc 53%) center / 100% 2px no-repeat;
&::-webkit-slider-thumb{
  appearance: none;
  width: 22px;
  height: 22px;
  border-radius: 50%;
  border: 2px solid #555;
  background: #eee;
}
`
const Task = styled.footer`
display: flex;
height: 70px;
flex: none;
background: linear-gradient(to right, #d6d4da, #dfd5d7 40%, #dcd5d7);
`
const Start = styled.button`
width: 85px;
`
const TaskSearch = styled.label`
display: flex;
align-items: center;
gap: 20px;
width: 600px;
padding: 0 5px 0 20px;
background: #fff;
border: 1px solid #c8c8ca;
font-size: 28px;
input{
  flex: 1;
  min-width: 0;
}
input::placeholder{
  color: #222;
  opacity: 1;
}
`
const TaskApp = styled.button`
display: flex;
align-items: center;
justify-content: center;
width: ${(p) => (p.$active ? 85 : p.$open ? 71 : 86)}px;
margin: 0 ${(p) => (p.$active ? 1 : p.$open ? 8 : 0)}px;
padding-top: 4px;
background: ${(p) => (p.$active ? "#eeecec" : "none")};
border-bottom: 4px solid ${(p) => (p.$open ? "#0078d7" : "transparent")};
`
const Pinned = styled.div`
display: flex;
margin-right: 8px;
`
const Weather = styled.div`
position: relative;
display: flex;
align-items: center;
gap: 16px;
padding-right: 33px;
font-size: 25px;
color: #000;
`
const Cpu = styled.div`
position: absolute;
right: 12px;
top: 7px;
text-align: center;
font-size: 21px;
line-height: 28px;
`
const Tray = styled.div`
display: flex;
align-items: center;
gap: 17px;
padding-right: 43px;
color: #000;
`
const Ime = styled.span`
font-size: 24px;
`
const Clock = styled.div`
text-align: center;
line-height: 28px;
`
const Notice = styled.div`
position: relative;
display: flex;
padding: 0 28px 0 14px;
`
const Badge = styled.span`
position: absolute;
left: 33px;
top: 15px;
width: 24px;
height: 24px;
border-radius: 3px;
background: #e60000;
color: #fff;
font-size: 15px;
line-height: 24px;
text-align: center;
`
